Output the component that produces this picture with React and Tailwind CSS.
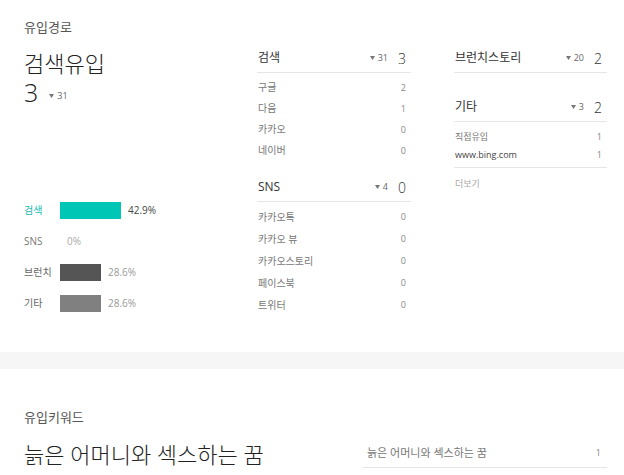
import React from 'react';

const sourceGroups = {
  search: {
    title: '검색',
    delta: 31,
    total: 3,
    rows: [
      ['구글', 2],
      ['다음', 1],
      ['카카오', 0],
      ['네이버', 0],
    ],
  },
  sns: {
    title: 'SNS',
    delta: 4,
    total: 0,
    rows: [
      ['카카오톡', 0],
      ['카카오 뷰', 0],
      ['카카오스토리', 0],
      ['페이스북', 0],
      ['트위터', 0],
    ],
  },
};

const shareBars = [
  { label: '검색', pct: '42.9%', bar: 'w-[61px] bg-[#00c6b6]', labelColor: 'text-[#18bdb0]', pctColor: 'text-[#444]' },
  { label: 'SNS', pct: '0%', bar: 'w-0', labelColor: 'text-[#777]', pctColor: 'text-[#aaa]' },
  { label: '브런치', pct: '28.6%', bar: 'w-[41px] bg-[#555555]', labelColor: 'text-[#666]', pctColor: 'text-[#999]' },
  { label: '기타', pct: '28.6%', bar: 'w-[41px] bg-[#808080]', labelColor: 'text-[#666]', pctColor: 'text-[#999]' },
];

const DownMark = ({ value }) => (
  <span className="flex items-center gap-[3px] text-[9px] text-[#666]">
    <svg width="5" height="4" viewBox="0 0 5 4">
      <path d="M0 0h5L2.5 4z" fill="#777" />
    </svg>
    {value}
  </span>
);

const GroupHeader = ({ title, delta, total }) => (
  <div className="flex items-center h-[29px] border-b border-[#e6e6e6] pl-px pr-[5px]">
    <span className="flex-1 text-[12px] text-[#333]">{title}</span>
    <DownMark value={delta} />
    <span className="ml-[10px] text-[14px] font-light text-[#333]">{total}</span>
  </div>
);

const GroupRows = ({ rows, rowClass }) => (
  <div className="flex flex-col pt-[4px]">
    {rows.map(([name, count]) => (
      <div key={name} className={`flex items-center justify-between pl-px pr-[5px] ${rowClass}`}>
        <span className="text-[10px] text-[#777]">{name}</span>
        <span className="text-[9px] text-[#888]">{count}</span>
      </div>
    ))}
  </div>
);

const App = () => {
  return (
    <div className="w-full bg-white font-['Open_Sans','Noto_Sans_CJK_KR',sans-serif] text-[#333]">
      {/* 유입경로 */}
      <div className="h-[352px] pl-6 pr-[17px] pt-[18px]">
        <div className="text-[13px] leading-[18px] text-[#555]">유입경로</div>

        <div className="flex mt-[8px]">
          <div className="flex flex-col w-[233px]">
            <div className="mt-[4px] text-[22px] leading-[30px] font-light text-[#222]">검색유입</div>
            <div className="flex items-center h-[28px] mt-px">
              <span className="text-[25px] font-light text-[#222]">3</span>
              <span className="ml-[11px] mt-[6px]">
                <DownMark value={31} />
              </span>
            </div>

            <div className="flex flex-col mt-[88px]">
              {shareBars.map((b) => (
                <div key={b.label} className="flex items-center h-[31px]">
                  <span className={`w-[36px] text-[10px] ${b.labelColor}`}>{b.label}</span>
                  <div className={`h-[17px] ${b.bar}`} />
                  <span className={`ml-[7px] text-[10px] ${b.pctColor}`}>{b.pct}</span>
                </div>
              ))}
            </div>
          </div>

          <div className="flex flex-col w-[154px]">
            <GroupHeader {...sourceGroups.search} />
            <GroupRows rows={sourceGroups.search.rows} rowClass="h-[21px]" />
            <div className="mt-[12px]">
              <GroupHeader {...sourceGroups.sns} />
            </div>
            <GroupRows rows={sourceGroups.sns.rows} rowClass="h-[22px]" />
          </div>

          <div className="flex flex-col w-[153px] ml-[43px]">
            <GroupHeader title="브런치스토리" delta={20} total={2} />
            <div className="mt-[20px]">
              <GroupHeader title="기타" delta={3} total={2} />
            </div>
            <div className="flex flex-col pt-[6px] pb-[3px] border-b border-[#e6e6e6]">
              <div className="flex items-center justify-between h-[18px] pl-px pr-[5px]">
                <span className="text-[9px] text-[#777]">직접유입</span>
                <span className="text-[9px] text-[#888]">1</span>
              </div>
              <div className="flex items-center justify-between h-[18px] pl-px pr-[5px]">
                <span className="text-[9px] text-[#444]">www.bing.com</span>
                <span className="text-[9px] text-[#888]">1</span>
              </div>
            </div>
            <div className="mt-[7px] leading-[18px] pl-px text-[9px] text-[#aaa]">더보기</div>
          </div>
        </div>
      </div>

      <div className="h-[17px] bg-[#f6f6f6]" />

      {/* 유입키워드 */}
      <div className="pl-6 pr-[17px] pt-[39px] pb-10">
        <div className="text-[13px] leading-[18px] text-[#555]">유입키워드</div>
        <div className="flex items-start mt-[13px]">
          <div className="flex-1 text-[22px] leading-[30px] font-light text-[#222]">늙은 어머니와 섹스하는 꿈</div>
          <div className="w-[244px]">
            <div className="flex items-center justify-between h-[29px] pl-[4px] pr-[6px] border-b border-[#e6e6e6]">
              <span className="text-[11px] text-[#777]">늙은 어머니와 섹스하는 꿈</span>
              <span className="text-[9px] text-[#888]">1</span>
            </div>
          </div>
        </div>
      </div>
    </div>
  );
};

export default App;
